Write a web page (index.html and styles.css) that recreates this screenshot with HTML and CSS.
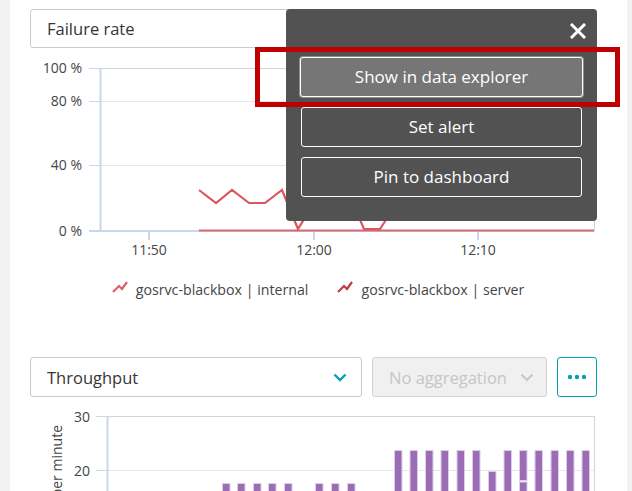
FILE: index.html
```html
<!DOCTYPE html>
<html>
<head>
<meta charset="utf-8">
<link rel="stylesheet" href="styles.css">
</head>
<body>
<div class="panel">
  <div class="row">
    <div class="select select-wide">
      <span>Failure rate</span>
      <svg class="chev" width="14" height="9" viewBox="0 0 14 9"><path d="M1.5 1.5 L7 7 L12.5 1.5" fill="none" stroke="#00a1b2" stroke-width="2.4"/></svg>
    </div>
  </div>

  <svg class="chart1" width="567" height="206" viewBox="30 56 567 206">
    <g stroke="#d4d4d4" stroke-width="1">
      <line x1="100" y1="68.5" x2="594" y2="68.5"/>
      <line x1="594.5" y1="68" x2="594.5" y2="231"/>
    </g>
    <g stroke="#e6e6e6" stroke-width="1">
      <line x1="100" y1="101.5" x2="594" y2="101.5"/>
      <line x1="100" y1="165.5" x2="594" y2="165.5"/>
    </g>
    <g stroke="#c9d6ee" stroke-width="1">
      <line x1="89" y1="68.5" x2="100" y2="68.5"/>
      <line x1="89" y1="101.5" x2="100" y2="101.5"/>
      <line x1="89" y1="165.5" x2="100" y2="165.5"/>
    </g>
    <g stroke="#c9d6ee" stroke-width="2">
      <line x1="100.5" y1="68" x2="100.5" y2="232"/>
      <line x1="89" y1="231" x2="594" y2="231"/>
      <line x1="149" y1="231" x2="149" y2="240"/>
      <line x1="314" y1="231" x2="314" y2="240"/>
      <line x1="478" y1="231" x2="478" y2="240"/>
    </g>
    <g class="axis-text" text-anchor="end">
      <text x="82" y="73">100 %</text>
      <text x="82" y="106">80 %</text>
      <text x="82" y="170">40 %</text>
      <text x="82" y="236">0 %</text>
    </g>
    <g class="axis-text" text-anchor="middle">
      <text x="149" y="255">11:50</text>
      <text x="314" y="255">12:00</text>
      <text x="478" y="255">12:10</text>
    </g>
    <line x1="199" y1="230.5" x2="594" y2="230.5" stroke="#d56a75" stroke-width="2"/>
    <polyline fill="none" stroke="#dc5560" stroke-width="2.2" stroke-linejoin="miter"
      points="199,190 216,203 232,190 249,203 265,203 282,190 298,229 314,203 331,190 347,190 364,229 380,229 397,203 413,190 430,203 446,190 463,203 479,190 496,203 512,190 529,203 545,190 562,203 578,190 594,203"/>
  </svg>

  <div class="legend">
    <div class="legend-item">
      <svg width="16" height="12" viewBox="0 0 16 12"><polyline points="1,11 7,5 10,8 15,1" fill="none" stroke="#e0616b" stroke-width="2.2"/></svg>
      <span>gosrvc-blackbox | internal</span>
    </div>
    <div class="legend-item">
      <svg width="16" height="12" viewBox="0 0 16 12"><polyline points="1,11 7,5 10,8 15,1" fill="none" stroke="#c23b48" stroke-width="2.2"/></svg>
      <span>gosrvc-blackbox | server</span>
    </div>
  </div>

  <div class="row row2">
    <div class="select select-tp">
      <span>Throughput</span>
      <svg class="chev" width="14" height="9" viewBox="0 0 14 9"><path d="M1.5 1.5 L7 7 L12.5 1.5" fill="none" stroke="#00a1b2" stroke-width="2.4"/></svg>
    </div>
    <div class="select select-agg">
      <span>No aggregation</span>
      <svg class="chev" width="14" height="9" viewBox="0 0 14 9"><path d="M1.5 1.5 L7 7 L12.5 1.5" fill="none" stroke="#c8c8c8" stroke-width="2.2"/></svg>
    </div>
    <div class="more">
      <svg width="20" height="6" viewBox="0 0 20 6"><circle cx="3" cy="3" r="2.2" fill="#00a1b2"/><circle cx="10" cy="3" r="2.2" fill="#00a1b2"/><circle cx="17" cy="3" r="2.2" fill="#00a1b2"/></svg>
    </div>
  </div>

  <svg class="chart2" width="567" height="86" viewBox="30 405 567 86">
    <line x1="107" y1="416.5" x2="594" y2="416.5" stroke="#d4d4d4" stroke-width="1"/>
    <line x1="107" y1="470.5" x2="594" y2="470.5" stroke="#e6e6e6" stroke-width="1"/>
    <line x1="594.5" y1="416" x2="594.5" y2="491" stroke="#d4d4d4" stroke-width="1"/>
    <line x1="96" y1="416.5" x2="107" y2="416.5" stroke="#c9d6ee" stroke-width="1"/>
    <line x1="96" y1="470.5" x2="107" y2="470.5" stroke="#c9d6ee" stroke-width="1"/>
    <line x1="107.5" y1="416" x2="107.5" y2="491" stroke="#c9d6ee" stroke-width="2"/>
    <g class="axis-text" text-anchor="end">
      <text x="90" y="422">30</text>
      <text x="90" y="476">20</text>
    </g>
    <text class="axis-text" text-anchor="end" transform="translate(62 425) rotate(-90)">Requests per minute</text>
    <g fill="#9a6db5" stroke="#dccdea" stroke-width="1">
      <rect x="222.5" y="483.5" width="7.5" height="20"/>
      <rect x="237.5" y="483.5" width="7.5" height="20"/>
      <rect x="253.5" y="483.5" width="7.5" height="20"/>
      <rect x="268.5" y="483.5" width="7.5" height="20"/>
      <rect x="284.5" y="483.5" width="7.5" height="20"/>
      <rect x="315.5" y="483.5" width="7.5" height="20"/>
      <rect x="331.5" y="483.5" width="7.5" height="20"/>
      <rect x="347.5" y="483.5" width="7.5" height="20"/>
      <rect x="394.5" y="450.5" width="7.5" height="50"/>
      <rect x="410" y="450.5" width="7.5" height="50"/>
      <rect x="425.5" y="450.5" width="7.5" height="50"/>
      <rect x="441" y="450.5" width="7.5" height="50"/>
      <rect x="457" y="450.5" width="7.5" height="50"/>
      <rect x="472.5" y="450.5" width="7.5" height="50"/>
      <rect x="488.5" y="471.5" width="7.5" height="30"/>
      <rect x="504" y="450.5" width="7.5" height="50"/>
      <rect x="519.5" y="450.5" width="7.5" height="30"/>
      <rect x="519.5" y="482" width="7.5" height="20"/>
      <rect x="535" y="450.5" width="7.5" height="50"/>
      <rect x="551" y="450.5" width="7.5" height="50"/>
      <rect x="566.5" y="450.5" width="7.5" height="50"/>
      <rect x="582" y="450.5" width="7.5" height="50"/>
    </g>
  </svg>

  <div class="overlay">
    <div class="overlay-head">
      <svg class="close" width="16" height="16" viewBox="0 0 16 16"><path d="M2 2 L14 14 M14 2 L2 14" stroke="#fff" stroke-width="3" stroke-linecap="square"/></svg>
    </div>
    <div class="actions">
      <div class="btn btn-active">Show in data explorer</div>
      <div class="btn">Set alert</div>
      <div class="btn">Pin to dashboard</div>
    </div>
  </div>
  <div class="highlight"></div>
</div>
</body>
</html>
```

FILE: styles.css
```css
html, body {
  margin: 0;
  padding: 0;
}
body {
  background: #f2f2f2;
  width: 632px;
  height: 491px;
  overflow: hidden;
  font-family: "Open Sans", "Noto Sans", sans-serif;
  color: #454646;
}
.panel {
  position: relative;
  margin-left: 10px;
  width: 617px;
  height: 491px;
  background: #fff;
  padding: 9px 30px 0 20px;
  box-sizing: border-box;
}
.row {
  display: flex;
  gap: 10px;
}
.select {
  height: 39px;
  box-sizing: border-box;
  border: 1px solid #cccccc;
  border-radius: 3px;
  display: flex;
  align-items: center;
  justify-content: space-between;
  padding: 0 14px 0 16px;
  font-size: 16.5px;
  color: #353535;
  background: #fff;
}
.select-wide {
  flex: 1;
}
.chart1 {
  display: block;
  margin-top: 8px;
}
.axis-text {
  font-family: "Open Sans", "Noto Sans", sans-serif;
  font-size: 14px;
  fill: #454646;
}
.legend {
  margin-top: 18px;
  height: 20px;
  display: flex;
  justify-content: center;
  gap: 29px;
  padding-left: 9px;
  font-size: 14.2px;
  line-height: 20px;
}
.legend-item {
  display: flex;
  align-items: center;
  gap: 8px;
}
.legend-item svg {
  margin-top: -6px;
}
.row2 {
  margin-top: 57px;
}
.row2 .select {
  height: 40px;
}
.select-tp {
  width: 332px;
}
.select-agg {
  width: 175px;
  background: #f0f0f0;
  color: #c6c6c6;
  border-color: #d2d2d2;
  padding: 0 12px 0 16px;
}
.more {
  width: 40px;
  height: 40px;
  box-sizing: border-box;
  border: 1px solid #00a1b2;
  border-radius: 3px;
  display: flex;
  align-items: center;
  justify-content: center;
}
.chart2 {
  display: block;
  margin-top: 8px;
}
.overlay {
  position: absolute;
  left: 276px;
  top: 9px;
  width: 311px;
  height: 212px;
  box-sizing: border-box;
  background: #525252;
  border-radius: 4px;
  padding: 14px 11px 24px 15px;
  display: flex;
  flex-direction: column;
}
.overlay-head {
  height: 34px;
  display: flex;
  justify-content: flex-end;
  align-items: flex-start;
}
.close {
  display: block;
}
.actions {
  display: flex;
  flex-direction: column;
  gap: 10px;
  margin-right: 3px;
}
.btn {
  height: 40px;
  box-sizing: border-box;
  border: 1px solid #ffffff;
  border-radius: 3px;
  color: #fff;
  font-size: 17px;
  display: flex;
  align-items: center;
  justify-content: center;
  padding-bottom: 2px;
  margin-right: 1px;
}
.btn-active {
  background: #767676;
  box-shadow: 0 0 0 1px #8e8e8e;
  margin-left: -1px;
  margin-right: 0;
}
.highlight {
  position: absolute;
  left: 245px;
  top: 47px;
  width: 365px;
  height: 60px;
  box-sizing: border-box;
  border: 5px solid #c00000;
}
```
